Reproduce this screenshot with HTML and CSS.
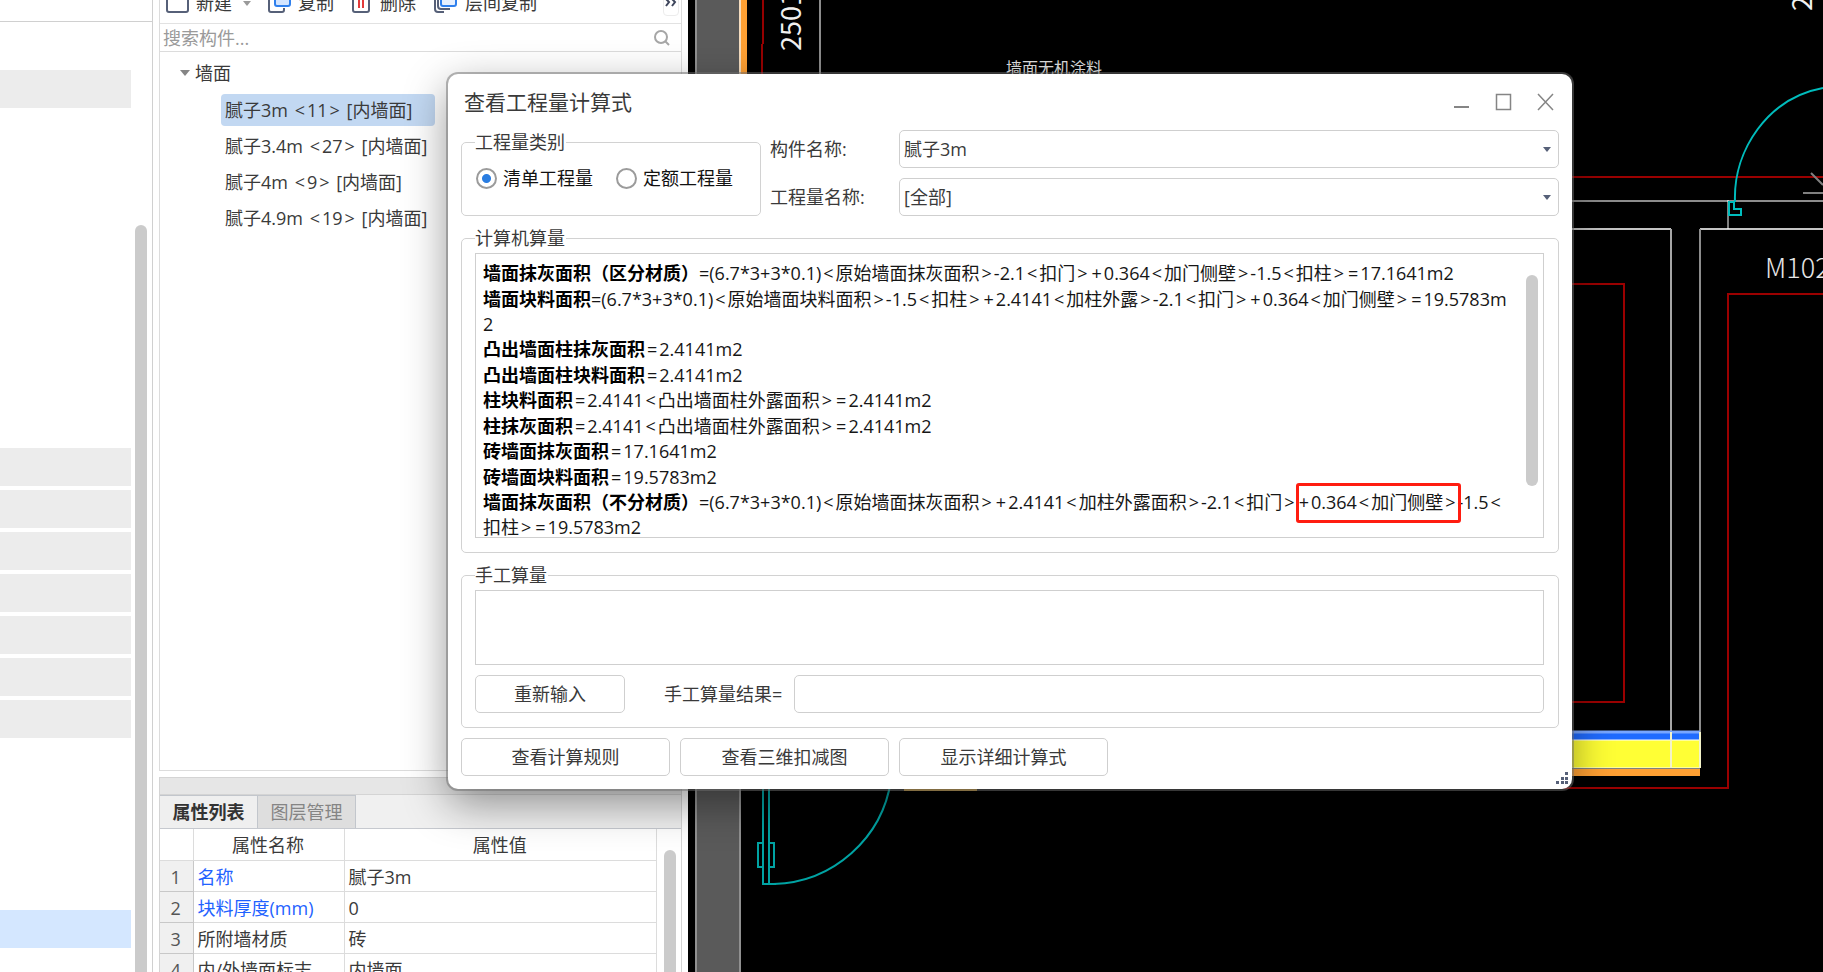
FILE: index.html
```html
<!DOCTYPE html>
<html lang="zh-CN">
<head>
<meta charset="utf-8">
<title>查看工程量计算式</title>
<link rel="stylesheet" href="styles.css">
</head>
<body>
<div class="app">
  <aside class="nav">
    <div class="nav-head"></div>
    <div class="nav-body">
      <div class="nav-rows">
        <div class="nav-row first"></div>
        <div class="nav-row"></div>
        <div class="nav-row"></div>
        <div class="nav-row"></div>
        <div class="nav-row"></div>
        <div class="nav-row"></div>
        <div class="nav-row"></div>
        <div class="nav-row"></div>
        <div class="nav-row current"></div>
      </div>
      <div class="nav-scroll"></div>
    </div>
  </aside>

  <section class="side">
    <div class="components">
      <div class="toolbar">
        <button class="tool new" type="button">
          <svg width="24" height="24" viewBox="0 0 24 24" fill="none" stroke="#566078" stroke-width="2"><rect x="1" y="1" width="21" height="20" rx="2"/></svg>
          <span>新建</span>
          <svg class="caret" width="8" height="5" viewBox="0 0 8 5"><path d="M0 0h8L4 5z" fill="#9a9a9a"/></svg>
        </button>
        <button class="tool copy" type="button">
          <svg width="24" height="24" viewBox="0 0 24 24" fill="none" stroke="#566078" stroke-width="2"><path d="M5 5H3a2 2 0 0 0-2 2v12a2 2 0 0 0 2 2h11a2 2 0 0 0 2-2v-2"/><rect x="7" y="1" width="15" height="14" rx="2" fill="#d3e5ff" stroke="#2f80ed"/></svg>
          <span>复制</span>
        </button>
        <button class="tool del" type="button">
          <svg width="19" height="24" viewBox="0 0 19 24" fill="none" stroke="#566078" stroke-width="2"><path d="M1 4v15a2 2 0 0 0 2 2h12a2 2 0 0 0 2-2V4"/><path d="M7 6v11M11 6v11" stroke="#e23b3b"/></svg>
          <span>删除</span>
        </button>
        <button class="tool floor" type="button">
          <svg width="24" height="24" viewBox="0 0 24 24" fill="none" stroke="#566078" stroke-width="2"><path d="M1 4v14a3 3 0 0 0 3 3h6"/><path d="M4 3v12a3 3 0 0 0 3 3h9"/><rect x="7" y="1" width="15" height="14" rx="2" fill="#e6f0ff" stroke="#2f80ed"/></svg>
          <span>层间复制</span>
        </button>
        <button class="more" type="button" aria-label="更多">
          <svg width="12" height="8" viewBox="0 0 12 8" fill="none" stroke="#3e465c" stroke-width="2"><path d="M1 0l3 3-3 4M7 0l3 3-3 4"/></svg>
        </button>
      </div>
      <div class="search">
        <input type="text" placeholder="搜索构件..." aria-label="搜索构件">
        <svg width="16" height="16" viewBox="0 0 16 16" fill="none" stroke="#a6a6a6" stroke-width="2"><circle cx="7" cy="7" r="6"/><path d="M11 11l4 4"/></svg>
      </div>
      <div class="tree">
        <div class="tree-root"><svg width="10" height="6" viewBox="0 0 10 6"><path d="M0 0h10L5 6z" fill="#858585"/></svg><span>墙面</span></div>
        <ul>
          <li class="selected">腻子3m <i>&lt;</i>11<i>&gt;</i> [内墙面]</li>
          <li>腻子3.4m <i>&lt;</i>27<i>&gt;</i> [内墙面]</li>
          <li>腻子4m <i>&lt;</i>9<i>&gt;</i> [内墙面]</li>
          <li>腻子4.9m <i>&lt;</i>19<i>&gt;</i> [内墙面]</li>
        </ul>
      </div>
    </div>

    <div class="props">
      <div class="props-bar"></div>
      <div class="tabs">
        <button class="tab active" type="button">属性列表</button>
        <button class="tab" type="button">图层管理</button>
      </div>
      <div class="props-body">
        <table>
          <thead><tr><th class="num"></th><th class="name">属性名称</th><th>属性值</th></tr></thead>
          <tbody>
            <tr><td class="num">1</td><td class="key">名称</td><td>腻子3m</td></tr>
            <tr><td class="num">2</td><td class="key">块料厚度(mm)</td><td>0</td></tr>
            <tr><td class="num">3</td><td>所附墙材质</td><td>砖</td></tr>
            <tr><td class="num">4</td><td>内/外墙面标志</td><td>内墙面</td></tr>
          </tbody>
        </table>
        <div class="props-scroll"></div>
      </div>
    </div>
  </section>

  <main class="canvas">
    <svg class="drawing" width="1135" height="972" viewBox="688 0 1135 972" fill="none">
      <rect x="696" y="0" width="44" height="972" fill="#5a5a5a"/>
      <path d="M696 0V972M740 0V972" stroke="#909090" stroke-width="2"/>
      <path d="M740 0V80" stroke="#f3dcc0" stroke-width="2"/>
      <path d="M744 0V80" stroke="#ffa033" stroke-width="6"/>
      <path d="M763 0V44M762 44V80" stroke="#960000" stroke-width="2"/>
      <path d="M820 0V80" stroke="#8c8c8c" stroke-width="2"/>
      <text class="cad dim" transform="translate(801 51) rotate(-90)">2501</text>
      <text class="cad-cn" x="1006" y="74">墙面无机涂料</text>
      <text class="cad dim" transform="translate(1812 11) rotate(-90)">2</text>

      <path d="M1560 177H1823M1560 284H1624V702H1560M1823 294H1728V788H1560" stroke="#9b0000" stroke-width="2"/>
      <path d="M1560 201H1823" stroke="#8c8c8c" stroke-width="2"/>
      <path d="M1560 229H1671M1700 229H1823" stroke="#c4c4c4" stroke-width="2"/>
      <path d="M1671 229V740" stroke="#a6a6a6" stroke-width="2"/>
      <path d="M1700 229V740" stroke="#8c8c8c" stroke-width="2"/>
      <path d="M1728 200V229" stroke="#fff"/>
      <path d="M1811 173L1823 185M1803 193H1823" stroke="#808080" stroke-width="2"/>
      <path d="M1735 202C1733 150 1768 98 1823 88M1729 202H1734V209H1741V215H1729Z" stroke="#00bcbc" stroke-width="2"/>
      <text class="cad" x="1765" y="278">M102</text>

      <rect x="1560" y="731" width="140" height="9" fill="#1f6bff"/>
      <path d="M1560 732H1700" stroke="#78a6ff" stroke-width="3"/>
      <rect x="1560" y="740" width="140" height="28" fill="#ffff35"/>
      <rect x="1560" y="769" width="140" height="7" fill="#ffa033"/>
      <path d="M1560 740H1700M1560 768H1700" stroke="#fff"/>
      <path d="M1671 732V768M1700 732V768" stroke="#f3f3c8" stroke-width="2"/>

      <rect x="904" y="770" width="73" height="21" fill="#d69a20"/>
      <path d="M763 780V884M769 780V884M762 884H776M763 843H758V867H763M769 843H774V867H769" stroke="#00a3a3" stroke-width="2"/>
      <path d="M774 884A122 122 0 0 0 891 780" stroke="#00a3a3" stroke-width="2"/>
    </svg>
  </main>
</div>

<section class="dialog" role="dialog" aria-labelledby="dlg-title">
  <header class="titlebar">
    <h1 id="dlg-title">查看工程量计算式</h1>
    <div class="win-buttons">
      <button type="button" aria-label="最小化"><svg width="18" height="18" viewBox="0 0 18 18" fill="none" stroke="#858585" stroke-width="2"><path d="M1 14h15"/></svg></button>
      <button type="button" aria-label="最大化"><svg width="18" height="18" viewBox="0 0 18 18" fill="none" stroke="#858585"><rect x="1.5" y="1.5" width="14" height="15" stroke-width="1.5"/></svg></button>
      <button type="button" aria-label="关闭"><svg width="18" height="18" viewBox="0 0 18 18" fill="none" stroke="#858585" stroke-width="1.5"><path d="M1 1l15 16M16 1L1 17"/></svg></button>
    </div>
  </header>

  <div class="options">
    <fieldset class="kind">
      <legend>工程量类别</legend>
      <label><input type="radio" name="kind" checked><span>清单工程量</span></label>
      <label><input type="radio" name="kind"><span>定额工程量</span></label>
    </fieldset>
    <div class="fields">
      <label for="comp">构件名称:</label>
      <div class="select"><select id="comp"><option>腻子3m</option></select></div>
      <label for="qty">工程量名称:</label>
      <div class="select"><select id="qty"><option>[全部]</option></select></div>
    </div>
  </div>

  <fieldset class="calc">
    <legend>计算机算量</legend>
    <div class="result">
      <div class="lines">
        <p><b>墙面抹灰面积（区分材质）</b>=(6.7*3+3*0.1)<i>&lt;</i>原始墙面抹灰面积<i>&gt;</i>-2.1<i>&lt;</i>扣门<i>&gt;</i><i>+</i>0.364<i>&lt;</i>加门侧壁<i>&gt;</i>-1.5<i>&lt;</i>扣柱<i>&gt;</i><i>=</i>17.1641m2</p>
        <p><b>墙面块料面积</b>=(6.7*3+3*0.1)<i>&lt;</i>原始墙面块料面积<i>&gt;</i>-1.5<i>&lt;</i>扣柱<i>&gt;</i><i>+</i>2.4141<i>&lt;</i>加柱外露<i>&gt;</i>-2.1<i>&lt;</i>扣门<i>&gt;</i><i>+</i>0.364<i>&lt;</i>加门侧壁<i>&gt;</i><i>=</i>19.5783m<br>2</p>
        <p><b>凸出墙面柱抹灰面积</b><i>=</i>2.4141m2</p>
        <p><b>凸出墙面柱块料面积</b><i>=</i>2.4141m2</p>
        <p><b>柱块料面积</b><i>=</i>2.4141<i>&lt;</i>凸出墙面柱外露面积<i>&gt;</i><i>=</i>2.4141m2</p>
        <p><b>柱抹灰面积</b><i>=</i>2.4141<i>&lt;</i>凸出墙面柱外露面积<i>&gt;</i><i>=</i>2.4141m2</p>
        <p><b>砖墙面抹灰面积</b><i>=</i>17.1641m2</p>
        <p><b>砖墙面块料面积</b><i>=</i>19.5783m2</p>
        <p><b>墙面抹灰面积（不分材质）</b>=(6.7*3+3*0.1)<i>&lt;</i>原始墙面抹灰面积<i>&gt;</i><i>+</i>2.4141<i>&lt;</i>加柱外露面积<i>&gt;</i>-2.1<i>&lt;</i>扣门<i>&gt;</i><span class="marked"><i>+</i>0.364<i>&lt;</i>加门侧壁<i>&gt;</i></span>-1.5<i>&lt;</i><br>扣柱<i>&gt;</i><i>=</i>19.5783m2</p>
      </div>
      <div class="result-scroll"></div>
    </div>
  </fieldset>

  <fieldset class="manual">
    <legend>手工算量</legend>
    <textarea aria-label="手工算量"></textarea>
    <div class="manual-row">
      <button class="btn reset" type="button">重新输入</button>
      <label for="manual-result">手工算量结果=</label>
      <input id="manual-result" type="text">
    </div>
  </fieldset>

  <footer class="actions">
    <button class="btn" type="button">查看计算规则</button>
    <button class="btn" type="button">查看三维扣减图</button>
    <button class="btn" type="button">显示详细计算式</button>
  </footer>
  <svg class="grip" width="13" height="13" viewBox="0 0 13 13" fill="#566078"><path d="M9 0h3v3H9zM5 5h3v3H5zM9 5h3v3H9zM0 9h3v3H0zM5 9h3v3H5zM9 9h3v3H9z"/></svg>
</section>
</body>
</html>
```
FILE: styles.css
```css
* { box-sizing: border-box; }

body {
  margin: 0;
  overflow: hidden;
  font: 18px/24px "Open Sans", "Noto Sans CJK SC", sans-serif;
  color: #3a3a3a;
  background: #fff;
}

button, input, select, textarea { font: inherit; color: inherit; }
button { padding: 0; background: none; border: 0; }
p, h1, ul { margin: 0; padding: 0; }
i { font-style: normal; padding: 0 2px; }

.app { display: flex; height: 100vh; }

/* left navigation */
.nav {
  flex: 0 0 153px;
  display: flex;
  flex-direction: column;
  border-right: 1px solid #d0d0d0;
}
.nav-head { flex: 0 0 22px; border-bottom: 1px solid #d0d0d0; }
.nav-body { flex: 1; display: flex; justify-content: space-between; padding-right: 5px; }
.nav-rows { width: 131px; padding-top: 48px; display: flex; flex-direction: column; gap: 4px; }
.nav-row { flex: 0 0 38px; background: #ececec; }
.nav-row.first { margin-bottom: 336px; }
.nav-row.current { margin-top: 168px; background: #d4e7ff; }
.nav-scroll { width: 12px; margin-top: 203px; border-radius: 6px 6px 0 0; background: #cbcbcb; }

/* component list */
.side { flex: 0 0 535px; display: flex; flex-direction: column; gap: 6px; padding: 0 6px; }
.components {
  flex: 1;
  min-height: 0;
  display: flex;
  flex-direction: column;
  border: solid #dcdcdc;
  border-width: 0 1px 1px;
}
.toolbar {
  flex: 0 0 24px;
  display: flex;
  align-items: flex-end;
  padding: 0 2px 7px 6px;
  overflow: hidden;
  border-bottom: 1px solid #e2e2e2;
}
.tool { display: flex; align-items: center; gap: 6px; height: 26px; }
.tool.new { margin-right: 17px; }
.tool.new .caret { margin-left: 5px; }
.tool.copy { margin-right: 18px; }
.tool.del { gap: 9px; margin-right: 18px; }
.tool.floor { gap: 7px; }
.more {
  margin-left: auto;
  width: 16px;
  height: 26px;
  display: flex;
  align-items: center;
  justify-content: center;
  border: 1px solid #ececec;
  border-radius: 4px;
}
.search { flex: 0 0 28px; display: flex; align-items: center; padding: 0 11px 0 3px; border-bottom: 1px solid #dcdcdc; }
.search input { flex: 1; min-width: 0; height: 26px; padding: 0; border: 0; outline: 0; background: none; }
.search input::placeholder { color: #9a9a9a; opacity: 1; }
.tree { padding-top: 9px; }
.tree-root { display: flex; align-items: center; gap: 5px; padding-left: 20px; }
.tree ul { list-style: none; display: flex; flex-direction: column; gap: 4px; padding: 9px 0 0 61px; align-items: flex-start; }
.tree li { min-width: 214px; padding: 4px; border-radius: 4px; white-space: nowrap; }
.tree li.selected { background: #c2d8f2; }

/* property table */
.props { flex: 0 0 195px; overflow: hidden; border: solid #d4d4d4; border-width: 1px 1px 0; }
.props-bar { height: 17px; background: #e6e6e6; border-bottom: 1px solid #d4d4d4; }
.tabs { display: flex; height: 34px; background: #f0f0f0; border-bottom: 1px solid #c6c9cf; }
.tab { width: 98px; border: solid #c2c6cc; border-width: 1px 1px 0 0; background: #dedede; color: #858585; }
.tab.active { background: #efefef; color: #333; font-weight: 700; }
.props-body { display: flex; justify-content: space-between; padding-right: 5px; }
table { width: 497px; border-collapse: collapse; table-layout: fixed; }
th, td { height: 31px; padding: 2px 5px 0 4px; border: 1px solid #dcdcdc; border-width: 0 1px 1px 0; font-weight: 400; text-align: left; white-space: nowrap; }
th { text-align: center; }
th.num { width: 33px; }
th.name { width: 151px; }
td.num { background: #f0f0f0; text-align: center; border-color: #c8c8c8; color: #555; }
td.key { color: #1f62ff; }
.props-scroll { width: 12px; margin-top: 21px; border-radius: 6px 6px 0 0; background: #cbcbcb; }

/* drawing canvas */
.canvas { flex: 1; min-width: 0; overflow: hidden; background: #000; }
.drawing { display: block; }
.cad { font: 300 27px "Noto Sans CJK SC", sans-serif; fill: #e6e6e6; }
.cad.dim { font-weight: 400; fill: #f0f0f0; }
.cad-cn { font: 16px "Noto Sans CJK SC", sans-serif; fill: #e0e0e0; }

/* dialog */
.dialog {
  position: absolute;
  left: 448px;
  top: 74px;
  width: 1124px;
  padding: 0 13px 13px;
  background: #fff;
  border-radius: 10px;
  box-shadow: 0 0 0 2px rgba(110, 110, 110, 0.5), 0 14px 44px rgba(0, 0, 0, 0.42);
}
.titlebar { display: flex; justify-content: space-between; align-items: center; height: 56px; padding: 0 4px 1px 3px; }
.titlebar h1 { font-size: 21px; line-height: 28px; font-weight: 400; }
.win-buttons { display: flex; gap: 24px; }
.win-buttons button { width: 18px; height: 18px; display: flex; }

.options { display: flex; gap: 9px; }
fieldset { margin: 0; padding: 0 13px; border: 1px solid #d2d2d2; border-radius: 5px; min-width: 0; }
legend { padding: 0 1px 0 0; }
.kind { flex: 0 0 300px; height: 86px; }
.kind label { float: left; display: flex; align-items: center; gap: 6px; margin-top: 12px; color: #111; }
.kind label + label { margin-left: 22px; }
.kind input {
  appearance: none;
  width: 21px;
  height: 21px;
  margin: 0 0 0 1px;
  border: 2px solid #9b9b9b;
  border-radius: 50%;
  background: #fff;
}
.kind input:checked { background: radial-gradient(circle, #2a7de1 4px, #fff 5px); }
.fields { flex: 1; display: grid; grid-template-columns: 120px 1fr; gap: 10px 9px; align-items: center; }
.select { position: relative; }
.select::after {
  content: "";
  position: absolute;
  right: 8px;
  top: 17px;
  border: 4px solid transparent;
  border-top: 5px solid #566078;
  border-bottom: 0;
}
.select select {
  appearance: none;
  display: block;
  width: 100%;
  height: 38px;
  padding: 0 4px;
  background: #fff;
  border: 1px solid #cfcfcf;
  border-radius: 5px;
}

.calc { margin-top: 10px; padding: 3px 14px 14px 13px; }
.result {
  display: flex;
  justify-content: space-between;
  height: 285px;
  padding: 7px 5px 0 7px;
  overflow: hidden;
  border: 1px solid #cfcfcf;
  color: #161616;
}
.lines { line-height: 25px; white-space: nowrap; }
.lines p:nth-child(odd) { margin-bottom: 1px; }
.lines b { color: #000; }
.marked { position: relative; }
.marked::after {
  content: "";
  position: absolute;
  inset: -7px -4px -9px -1px;
  border: 3px solid #ff1c10;
  border-radius: 3px;
}
.result-scroll { flex: 0 0 12px; height: 211px; margin-top: 14px; border-radius: 6px; background: #cbcbcb; }

.manual { margin-top: 10px; padding: 3px 14px 14px 13px; }
.manual textarea { display: block; width: 100%; height: 75px; border: 1px solid #cfcfcf; resize: none; }
.manual-row { display: flex; align-items: center; margin-top: 10px; }
.btn { width: 209px; height: 38px; border: 1px solid #cfcfcf; border-radius: 5px; background: #fff; }
.btn.reset { width: 150px; margin-right: 39px; }
.manual-row label { margin-right: 12px; }
.manual-row input { flex: 1; min-width: 0; height: 38px; border: 1px solid #cfcfcf; border-radius: 5px; }

.actions { display: flex; gap: 10px; margin-top: 10px; }
.grip { position: absolute; right: 3px; bottom: 4px; }
```
